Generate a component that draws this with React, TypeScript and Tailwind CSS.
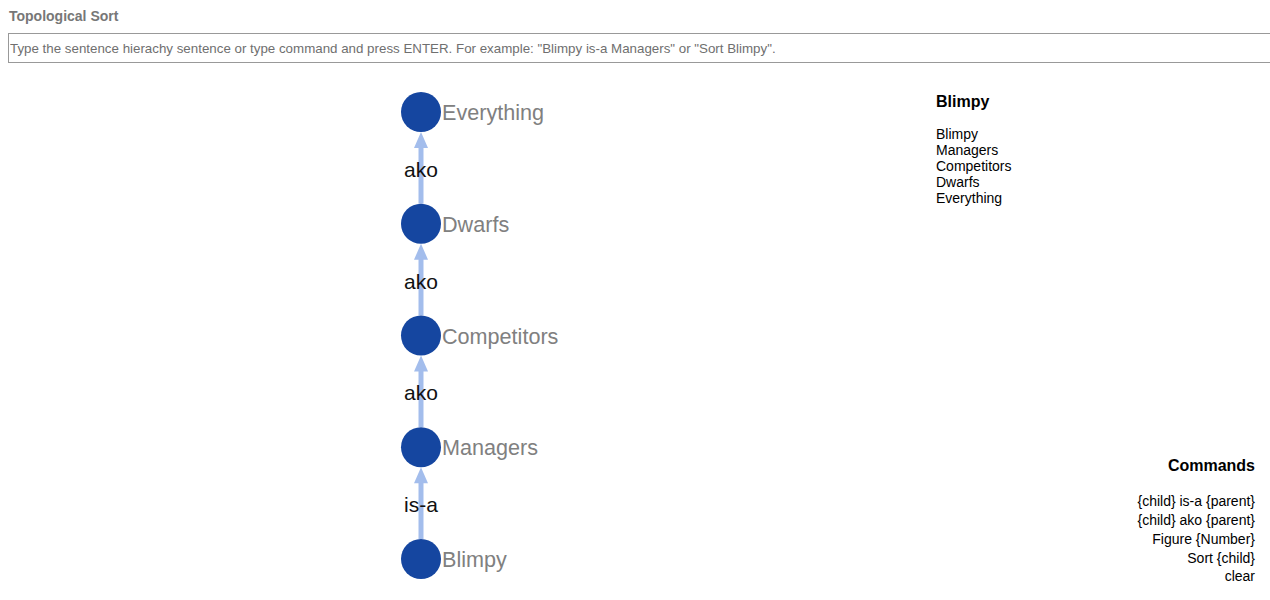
import * as React from "react";

const NODES = ["Everything", "Dwarfs", "Competitors", "Managers", "Blimpy"];
const EDGES = ["ako", "ako", "ako", "is-a"];
const ORDER = ["Blimpy", "Managers", "Competitors", "Dwarfs", "Everything"];
const COMMANDS = ["{child} is-a {parent}", "{child} ako {parent}", "Figure {Number}", "Sort {child}", "clear"];

const CX = 421;
const TOP = 48;
const STEP = 111.75;
const R = 20;

function Graph() {
  return (
    <svg width={928} height={531} className="block shrink-0" style={{ fontFamily: "Arial, 'Liberation Sans', sans-serif" }}>
      {EDGES.map((label, i) => {
        const upper = TOP + i * STEP;
        const lower = TOP + (i + 1) * STEP;
        const tip = upper + R;
        return (
          <g key={i}>
            <line x1={CX} x2={CX} y1={lower - R} y2={tip + 14} stroke="#a3bdec" strokeWidth={5} />
            <polygon points={`${CX},${tip} ${CX - 7},${tip + 16} ${CX + 7},${tip + 16}`} fill="#a3bdec" />
            <text x={CX} y={upper + STEP / 2 + 9} textAnchor="middle" fontSize={21} fill="#111">
              {label}
            </text>
          </g>
        );
      })}
      {NODES.map((name, i) => {
        const cy = TOP + i * STEP;
        return (
          <g key={name}>
            <circle cx={CX} cy={cy} r={R} fill="#1546a0" />
            <text x={442} y={cy + 8} fontSize={21.6} fill="#808080">
              {name}
            </text>
          </g>
        );
      })}
    </svg>
  );
}

export default function App() {
  return (
    <div className="h-[600px] w-[1270px] overflow-hidden bg-white font-['Liberation_Sans',Arial,sans-serif]">
      <div className="pl-[9px] pt-[7px] text-[14px] font-bold leading-[18px] text-[#777]">Topological Sort</div>
      <input
        className="ml-2 mt-2 block h-[30px] w-[1280px] border border-[#999] px-[1px] text-[13.33px] text-[#333] outline-none placeholder:text-[#6f6f6f]"
        placeholder={'Type the sentence hierachy sentence or type command and press ENTER. For example: "Blimpy is-a Managers" or "Sort Blimpy".'}
      />
      <div className="mt-[1px] flex">
        <Graph />
        <div className="flex flex-1 flex-col justify-between pb-[9px] pr-[15px]">
          <div className="pl-[8px] pt-[28px] text-[14px] leading-4 text-black">
            <div className="mb-[14px] text-[16px] font-bold leading-5">Blimpy</div>
            {ORDER.map((o) => (
              <div key={o}>{o}</div>
            ))}
          </div>
          <div className="text-right text-[14px] leading-[18.75px] text-black">
            <div className="mb-[16px] text-[16px] font-bold leading-5">Commands</div>
            {COMMANDS.map((c) => (
              <div key={c}>{c}</div>
            ))}
          </div>
        </div>
      </div>
    </div>
  );
}
